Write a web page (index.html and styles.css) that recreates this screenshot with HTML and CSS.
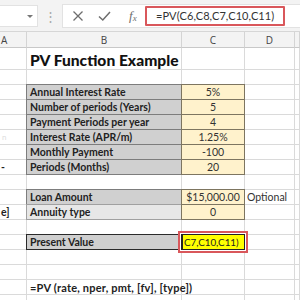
FILE: index.html
```html
<!DOCTYPE html>
<html lang="en">

<head>
    <meta charset="UTF-8">
    <title>PV Function Example</title>
    <link rel="stylesheet" href="styles.css">
</head>

<body>
    <div class="formula-bar">
        <div class="name-box"><span class="caret"></span></div>
        <div class="grip">⋮</div>
        <div class="formula-box">
            <svg class="icon" width="12" height="12" viewBox="0 0 12 12">
                <path d="M1.5 1.5 L10.5 10.5 M10.5 1.5 L1.5 10.5" stroke="#6d6d6d" stroke-width="1.3" fill="none" />
            </svg>
            <svg class="icon" width="13" height="12" viewBox="0 0 13 12">
                <path d="M1 6.5 L4.8 10 L12 2" stroke="#6d6d6d" stroke-width="1.5" fill="none" />
            </svg>
            <span class="fx">f<sub>x</sub></span>
            <div class="formula">=PV(C6,C8,C7,C10,C11)</div>
        </div>
    </div>

    <div class="sheet">
        <!-- column headers -->
        <div class="c hd hd-a">A</div>
        <div class="c hd">B</div>
        <div class="c hd">C</div>
        <div class="c hd">D</div>
        <div class="c hd"></div>

        <!-- 1 -->
        <div class="c"></div>
        <div class="c title">PV Function Example</div>
        <div class="c"></div>
        <div class="c"></div>
        <div class="c"></div>
        <!-- 2 -->
        <div class="c"></div>
        <div class="c"></div>
        <div class="c"></div>
        <div class="c"></div>
        <div class="c"></div>
        <!-- 3 -->
        <div class="c"></div>
        <div class="c lbl">Annual Interest Rate</div>
        <div class="c val">5%</div>
        <div class="c"></div>
        <div class="c"></div>
        <!-- 4 -->
        <div class="c"></div>
        <div class="c lbl">Number of periods (Years)</div>
        <div class="c val">5</div>
        <div class="c"></div>
        <div class="c"></div>
        <!-- 5 -->
        <div class="c"></div>
        <div class="c lbl">Payment Periods per year</div>
        <div class="c val">4</div>
        <div class="c"></div>
        <div class="c"></div>
        <!-- 6 -->
        <div class="c a-txt faint">n</div>
        <div class="c lbl">Interest Rate (APR/m)</div>
        <div class="c val">1.25%</div>
        <div class="c"></div>
        <div class="c"></div>
        <!-- 7 -->
        <div class="c"></div>
        <div class="c lbl">Monthly Payment</div>
        <div class="c val">-100</div>
        <div class="c"></div>
        <div class="c"></div>
        <!-- 8 -->
        <div class="c a-txt">-</div>
        <div class="c lbl">Periods (Months)</div>
        <div class="c val">20</div>
        <div class="c"></div>
        <div class="c"></div>
        <!-- 9 -->
        <div class="c"></div>
        <div class="c"></div>
        <div class="c"></div>
        <div class="c"></div>
        <div class="c"></div>
        <!-- 10 -->
        <div class="c"></div>
        <div class="c lbl">Loan Amount</div>
        <div class="c val">$15,000.00</div>
        <div class="c note">Optional</div>
        <div class="c"></div>
        <!-- 11 -->
        <div class="c a-txt">e]</div>
        <div class="c lbl lbl-light">Annuity type</div>
        <div class="c val">0</div>
        <div class="c"></div>
        <div class="c"></div>
        <!-- 12 -->
        <div class="c"></div>
        <div class="c"></div>
        <div class="c"></div>
        <div class="c"></div>
        <div class="c"></div>
        <!-- 13 -->
        <div class="c"></div>
        <div class="c lbl lbl-result">Present Value</div>
        <div class="c editing">C7,C10,C11)</div>
        <div class="c"></div>
        <div class="c"></div>
        <!-- 14 -->
        <div class="c"></div>
        <div class="c"></div>
        <div class="c"></div>
        <div class="c"></div>
        <div class="c"></div>
        <!-- 15 -->
        <div class="c"></div>
        <div class="c"></div>
        <div class="c"></div>
        <div class="c"></div>
        <div class="c"></div>
        <!-- 16 -->
        <div class="c"></div>
        <div class="c syntax">=PV (rate, nper, pmt, [fv], [type])</div>
        <div class="c"></div>
        <div class="c"></div>
        <div class="c"></div>
        <!-- 17 -->
        <div class="c"></div>
        <div class="c"></div>
        <div class="c"></div>
        <div class="c"></div>
        <div class="c"></div>
    </div>
</body>

</html>
```

FILE: styles.css
```css
body {
    margin: 0;
    width: 300px;
    height: 300px;
    overflow: hidden;
    background: #fff;
    font-family: Lato, "Open Sans", sans-serif;
}

/* formula bar */
.formula-bar {
    height: 31px;
    display: flex;
    align-items: center;
    background: #f3f3f3;
    border-bottom: 1px solid #d6d6d6;
}

.name-box {
    width: 38px;
    height: 22px;
    background: #fff;
    position: relative;
    box-sizing: border-box;
    border: 1px solid #e2e2e2;
    border-left: none;
}

.caret {
    position: absolute;
    right: 4px;
    top: 9px;
    border-left: 3px solid transparent;
    border-right: 3px solid transparent;
    border-top: 3px solid #777;
}

.grip {
    width: 24px;
    text-align: center;
    color: #a8a8a8;
    font-size: 13px;
}

.formula-box {
    flex: 1;
    height: 22px;
    background: #fff;
    border: 1px solid #e2e2e2;
    border-right: none;
    display: flex;
    align-items: center;
    padding-left: 9px;
}

.icon {
    margin-right: 14px;
}

.icon+.icon {
    margin-right: 18px;
}

.fx {
    font-family: "Liberation Serif", serif;
    font-style: italic;
    color: #6d6d6d;
    font-size: 13px;
    width: 13px;
}

.fx sub {
    font-size: 9px;
    vertical-align: -1px;
}

.formula {
    margin-left: 3px;
    height: 16px;
    border: 2px solid #d9575b;
    border-radius: 1px;
    padding: 0 9px 0 9px;
    display: flex;
    align-items: center;
    font-size: 11px;
    color: #333;
    letter-spacing: 0.1px;
}

/* sheet grid */
.sheet {
    display: grid;
    grid-template-columns: 27px 155px 63px 50px 1fr;
    grid-template-rows: 16px 22px 15px repeat(15, 15px);
}

.c {
    box-sizing: border-box;
    border-right: 1px solid #dadada;
    border-bottom: 1px solid #dadada;
    display: flex;
    align-items: center;
    padding-left: 3px;
    font-size: 10.5px;
    color: #222;
    white-space: nowrap;
    overflow: visible;
    min-width: 0;
}

.hd {
    background: #f3f3f3;
    border-right-color: #d4d4d4;
    border-bottom-color: #c8c8c8;
    justify-content: center;
    padding: 0;
    color: #444;
    font-family: "Open Sans", sans-serif;
    font-size: 10px;
}

.hd-a {
    justify-content: flex-start;
    padding-left: 1px;
}

.title {
    font-weight: 900;
    font-size: 15.6px;
    color: #111;
    padding-top: 2px;
}

.lbl {
    background: #d0d0d0;
    border: 1px solid #7d7d7d;
    margin: -1px 0 0 -1px;
    font-weight: 700;
}

.lbl-light {
    background: #e7e7e7;
    border-color: #a0a0a0;
}

.lbl-result {
    border-color: #2a2a2a;
    background: #cfcfcf;
}

.val {
    background: #fff2cc;
    border: 1px solid #7d7560;
    margin: -1px 0 0 -1px;
    justify-content: center;
    padding: 0;
    color: #333;
}

.note {
    padding-left: 2px;
    color: #333;
}

.a-txt {
    justify-content: flex-start;
    padding: 0 0 0 1px;
    font-weight: 700;
}

.faint {
    color: #dedede;
    font-weight: 400;
    font-size: 8px;
    padding-left: 2px;
}

.editing {
    position: relative;
    background: #ffff00;
    border: 1px solid #222;
    border-left-width: 2px;
    margin: -1px 0 0 -1px;
    padding-left: 1px;
    font-size: 9.8px;
    color: #222;
    box-shadow: 0 0 0 1px #fff, 0 0 0 3px #d9575b;
    z-index: 1;
}

.syntax {
    font-weight: 700;
    font-size: 11px;
    letter-spacing: 0.2px;
}
```
